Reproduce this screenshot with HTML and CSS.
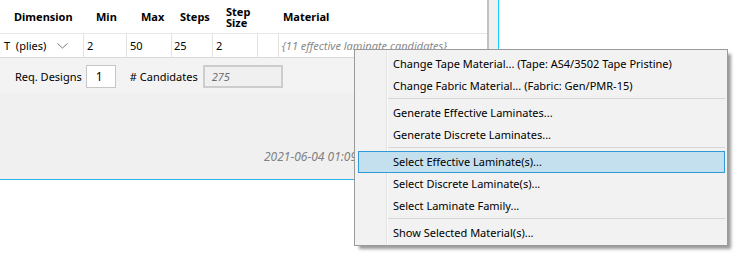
FILE: index.html
```html
<!DOCTYPE html>
<html>
<head>
<meta charset="utf-8">
<link rel="stylesheet" href="styles.css">
</head>
<body>
<div class="panel">
  <div class="top">
    <div class="table">
      <div class="hcell h-dim">Dimension</div>
      <div class="hcell h-min">Min</div>
      <div class="hcell h-max">Max</div>
      <div class="hcell h-steps">Steps</div>
      <div class="hcell h-size">Step<br>Size</div>
      <div class="hcell"></div>
      <div class="hcell h-mat">Material</div>

      <div class="dcell c-dim"><span>T&nbsp;&nbsp;(plies)</span>
        <svg class="chev" width="11" height="6" viewBox="0 0 11 6"><path d="M0.5 0.5 L5.5 5 L10.5 0.5" fill="none" stroke="#7a7a7a" stroke-width="1"/></svg>
      </div>
      <div class="dcell">2</div>
      <div class="dcell">50</div>
      <div class="dcell c-steps">25</div>
      <div class="dcell">2</div>
      <div class="dcell"></div>
      <div class="dcell c-mat">{11 effective laminate candidates}</div>
    </div>
    <div class="vscroll"></div>
  </div>
  <div class="params">
    <span class="lbl">Req. Designs</span>
    <div class="inp">1</div>
    <span class="lbl lbl2"># Candidates</span>
    <div class="ro">275</div>
  </div>
  <div class="footer">2021-06-04 01:09:27</div>
</div>

<div class="menu">
  <div class="item">Change Tape Material... (Tape: AS4/3502 Tape Pristine)</div>
  <div class="item">Change Fabric Material... (Fabric: Gen/PMR-15)</div>
  <div class="sep"></div>
  <div class="item">Generate Effective Laminates...</div>
  <div class="item">Generate Discrete Laminates...</div>
  <div class="sep"></div>
  <div class="item active">Select Effective Laminate(s)...</div>
  <div class="item">Select Discrete Laminate(s)...</div>
  <div class="item">Select Laminate Family...</div>
  <div class="sep"></div>
  <div class="item">Show Selected Material(s)...</div>
</div>
</body>
</html>
```

FILE: styles.css
```css
html, body {
  margin: 0;
  padding: 0;
  background: #ffffff;
}
body {
  font-family: "Noto Sans", "Open Sans", sans-serif;
  font-size: 11px;
  color: #000;
  width: 735px;
  height: 253px;
  overflow: hidden;
  position: relative;
}
.panel {
  width: 499px;
  height: 180px;
  box-sizing: border-box;
  border-right: 1px solid #12cdf8;
  border-bottom: 1px solid #2cb2ea;
  background: #f0f0f0;
  display: flex;
  flex-direction: column;
}
.top {
  display: flex;
}
.table {
  width: 487px;
  background: #fff;
  display: grid;
  grid-template-columns: 83px 43px 45px 41px 45px 21px 209px;
  grid-template-rows: 33px 24px;
}
.vscroll {
  width: 9px;
  border-left: 2px solid #c2c2c2;
  background: #f0f0f0;
}
.hcell {
  font-weight: bold;
  display: flex;
  align-items: center;
  border-bottom: 1px solid #e6e6e6;
  box-sizing: content-box;
  height: 33px;
  white-space: nowrap;
}
.h-dim { padding-left: 14px; }
.h-min { padding-left: 13px; }
.h-max { padding-left: 15px; }
.h-steps { padding-left: 9px; }
.h-size { padding-left: 14px; line-height: 11px; }
.h-mat { padding-left: 5px; }
.dcell {
  border-left: 1px solid #e3e3e3;
  border-bottom: 1px solid #d9d9d9;
  padding-left: 3px;
  display: flex;
  align-items: center;
  white-space: nowrap;
  overflow: hidden;
  height: 24px;
}
.c-dim {
  border-left: none;
  padding-left: 4px;
}
.c-dim span { width: 53px; }
.chev { margin-top: 1px; }
.c-steps { padding-left: 2px; }
.c-mat {
  color: #8a8a8a;
  font-style: italic;
}
.params {
  height: 35px;
  background: #f3f3f3;
  display: flex;
  align-items: center;
  padding: 2px 0 0 15px;
  box-sizing: border-box;
  margin-top: 1px;
}
.lbl { white-space: nowrap; }
.inp {
  width: 30px;
  height: 23px;
  box-sizing: border-box;
  margin-left: 4px;
  background: #fff;
  border: 1px solid #c6c6c6;
  padding-left: 9px;
  line-height: 21px;
  font-size: 12px;
}
.lbl2 { margin-left: 14px; }
.ro {
  width: 80px;
  height: 23px;
  box-sizing: border-box;
  margin-left: 5px;
  background: #f0f0f0;
  border: 2px solid #cdcdcd;
  padding-left: 7px;
  line-height: 19px;
  font-style: italic;
  color: #6d6d6d;
}
.footer {
  margin-top: auto;
  padding: 0 0 14px 264px;
  line-height: 16px;
  color: #808080;
  font-style: italic;
  font-size: 12px;
  white-space: nowrap;
}
.menu {
  position: absolute;
  left: 354px;
  top: 49px;
  width: 374px;
  box-sizing: border-box;
  border: 1px solid #9a9a9a;
  background: #f2f2f2 linear-gradient(to right, transparent 31px, #e2e2e2 31px, #e2e2e2 32px, #fcfcfc 32px, #fcfcfc 33px, transparent 33px);
  padding: 3px 2px 1px 3px;
  box-shadow: 4px 4px 3px -1px rgba(0, 0, 0, 0.4);
}
.item {
  height: 22px;
  line-height: 20px;
  box-sizing: border-box;
  border: 1px solid transparent;
  padding-left: 34px;
  white-space: nowrap;
}
.item.active {
  background: #c4dfee;
  border-color: #2f9ad6;
}
.sep {
  height: 5px;
  box-sizing: border-box;
  padding-top: 1px;
  margin-left: 30px;
  background: linear-gradient(#d7d7d7, #d7d7d7) no-repeat 0 1px / 100% 1px;
}
```
